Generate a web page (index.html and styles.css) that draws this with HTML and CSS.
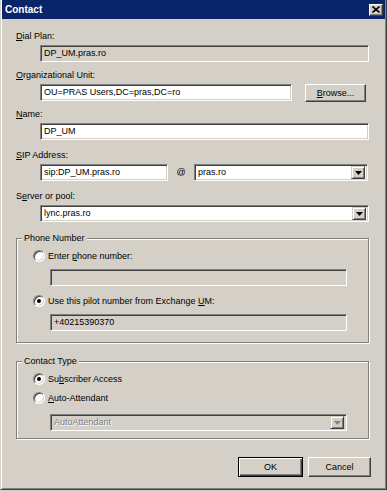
FILE: index.html
```html
<!DOCTYPE html>
<html>
<head>
<meta charset="utf-8">
<link rel="stylesheet" href="styles.css">
</head>
<body>
<div class="window">
  <div class="titlebar">
    <span class="title">Contact</span>
    <span class="close"><svg width="8" height="7" viewBox="0 0 8 7"><path d="M0.5 0.5 L7.5 6.5 M7.5 0.5 L0.5 6.5" stroke="#000" stroke-width="1.6"/></svg></span>
  </div>
  <div class="content">
    <div class="group g-dial">
      <div class="label"><u>D</u>ial Plan:</div>
      <div class="field disabled indent">DP_UM.pras.ro</div>
    </div>
    <div class="group g-ou">
      <div class="label"><u>O</u>rganizational Unit:</div>
      <div class="line">
        <div class="field indent w-ou">OU=PRAS Users,DC=pras,DC=ro</div>
        <div class="btn btn-browse"><u>B</u>rowse...</div>
      </div>
    </div>
    <div class="group g-name">
      <div class="label"><u>N</u>ame:</div>
      <div class="field indent">DP_UM</div>
    </div>
    <div class="group g-sip">
      <div class="label"><u>S</u>IP Address:</div>
      <div class="line">
        <div class="field indent w-sip">sip:DP_UM.pras.ro</div>
        <div class="at">@</div>
        <div class="field combo w-dom"><span class="val">pras.ro</span><span class="arrow"><svg width="7" height="4" viewBox="0 0 7 4"><path d="M0 0 H7 L3.5 4 Z" fill="#000"/></svg></span></div>
      </div>
    </div>
    <div class="group g-server">
      <div class="label">S<u>e</u>rver or pool:</div>
      <div class="field combo indent"><span class="val">lync.pras.ro</span><span class="arrow"><svg width="7" height="4" viewBox="0 0 7 4"><path d="M0 0 H7 L3.5 4 Z" fill="#000"/></svg></span></div>
    </div>

    <fieldset class="box box-phone">
      <legend>Phone Number</legend>
      <div class="radio-row r1"><span class="radio"></span><span class="rtext">Enter <u>p</u>hone number:</span></div>
      <div class="field disabled sub"></div>
      <div class="radio-row r2"><span class="radio checked"></span><span class="rtext">Use this pilot number from Exchange <u>U</u>M:</span></div>
      <div class="field disabled sub">+40215390370</div>
    </fieldset>

    <fieldset class="box box-type">
      <legend>Contact Type</legend>
      <div class="radio-row r3"><span class="radio checked"></span><span class="rtext">Su<u>b</u>scriber Access</span></div>
      <div class="radio-row r4"><span class="radio"></span><span class="rtext"><u>A</u>uto-Attendant</span></div>
      <div class="field combo disabled-combo sub sub-combo"><span class="val grey">AutoAttendant</span><span class="arrow"><svg width="7" height="4" viewBox="0 0 7 4"><path d="M0 0 H7 L3.5 4 Z" fill="#808080"/></svg></span></div>
    </fieldset>

    <div class="buttons">
      <div class="btn btn-default">OK</div>
      <div class="btn btn-cancel">Cancel</div>
    </div>
  </div>
</div>
</body>
</html>
```

FILE: styles.css
```css
* { box-sizing: border-box; }
html, body { margin: 0; padding: 0; }
body {
  width: 387px;
  height: 491px;
  overflow: hidden;
  background: #d4d0c8;
  font-family: "Liberation Sans", Arial, sans-serif;
  font-size: 9px;
  color: #000;
}
u { text-decoration: underline; text-underline-offset: 1px; }

.window {
  width: 387px;
  height: 490px;
  background: #d4d0c8;
  border-left: 1px solid #d4d0c8;
  border-right: 1px solid #404040;
  border-bottom: 1px solid #404040;
  box-shadow: inset 1px 0 0 #fff, inset -1px -1px 0 #808080;
  padding: 0 1px 2px 1px;
  display: flex;
  flex-direction: column;
}

.titlebar {
  height: 19px;
  background: #0a246a;
  display: flex;
  align-items: center;
  justify-content: space-between;
  padding: 0 2px 0 3px;
}
.title {
  color: #fff;
  font-weight: bold;
  font-size: 10px;
}
.close {
  width: 14px;
  height: 12px;
  background: #d4d0c8;
  border: 1px solid;
  border-color: #fff #404040 #404040 #fff;
  box-shadow: inset -1px -1px 0 #808080;
  display: flex;
  align-items: center;
  justify-content: center;
}

.content {
  padding: 12px 16px 0 14px;
  display: flex;
  flex-direction: column;
}

.label {
  height: 11px;
  line-height: 11px;
  margin-bottom: 3px;
  white-space: nowrap;
}
.indent { margin-left: 24px; }
.line { display: flex; align-items: flex-start; }

.field {
  height: 17px;
  line-height: 15px;
  background: #fff;
  border: 1px solid;
  border-color: #808080 #fff #fff #808080;
  box-shadow: inset 1px 1px 0 #404040, inset -1px -1px 0 #d4d0c8;
  padding-left: 3px;
  white-space: nowrap;
  overflow: hidden;
}
.field.disabled { background: #d4d0c8; }

.g-ou { margin-top: 8px; }
.g-name { margin-top: 7px; }
.g-sip { margin-top: 10px; }
.g-server { margin-top: 10px; }

.w-ou { width: 252px; }
.btn-browse { margin-left: 13px; width: 61px; height: 18px; }
.w-sip { width: 128px; }
.at { width: 26px; text-align: center; line-height: 17px; }
.w-dom { width: 174px; }

.combo {
  display: flex;
  align-items: center;
  justify-content: space-between;
  padding-right: 2px;
}
.arrow {
  width: 14px;
  height: 13px;
  background: #d4d0c8;
  border: 1px solid;
  border-color: #d4d0c8 #404040 #404040 #d4d0c8;
  box-shadow: inset 1px 1px 0 #fff, inset -1px -1px 0 #808080;
  display: flex;
  align-items: center;
  justify-content: center;
}
.disabled-combo { background: #d4d0c8; }
.grey { color: #808080; text-shadow: 1px 1px 0 #fff; }

.btn {
  display: flex;
  align-items: center;
  justify-content: center;
  background: #d4d0c8;
  border: 1px solid;
  border-color: #fff #404040 #404040 #fff;
  box-shadow: inset -1px -1px 0 #808080, inset 1px 1px 0 #d4d0c8;
}

.box {
  margin: 0;
  border: 1px solid #808080;
  box-shadow: inset 1px 1px 0 #fff, 1px 1px 0 #fff;
  padding: 0 21px 0 0;
  min-width: 0;
}
.box legend {
  margin-left: 5px;
  padding: 0 2px;
  line-height: 11px;
  background: #d4d0c8;
}
.box-phone { margin-top: 11px; padding-bottom: 11px; }
.box-type { margin-top: 13px; padding-bottom: 7px; }

.radio-row {
  display: flex;
  align-items: center;
  height: 13px;
  margin-left: 16px;
}
.r1 { margin-top: 5px; }
.r2 { margin-top: 8px; }
.r3 { margin-top: 5px; }
.r4 { margin-top: 6px; }
.sub { margin-left: 33px; margin-top: 7px; }
.sub-combo { margin-top: 10px; }

.radio {
  width: 12px;
  height: 12px;
  border-radius: 50%;
  border: 1px solid;
  border-color: #808080 #fff #fff #808080;
  box-shadow: inset 1px 1px 0 #404040, inset -1px -1px 0 #d4d0c8;
  background: #fff;
  display: flex;
  align-items: center;
  justify-content: center;
}
.radio.checked::after {
  content: "";
  width: 4px;
  height: 4px;
  border-radius: 50%;
  background: #000;
}
.rtext { margin-left: 3px; }

.buttons {
  display: flex;
  justify-content: flex-end;
  gap: 5px;
  margin-top: 18px;
  margin-right: -2px;
}
.btn-default {
  width: 65px;
  height: 20px;
  border: 1px solid #000;
  box-shadow: inset 1px 1px 0 #fff, inset -1px -1px 0 #404040, inset -2px -2px 0 #808080;
}
.btn-cancel { width: 63px; height: 20px; }
```
